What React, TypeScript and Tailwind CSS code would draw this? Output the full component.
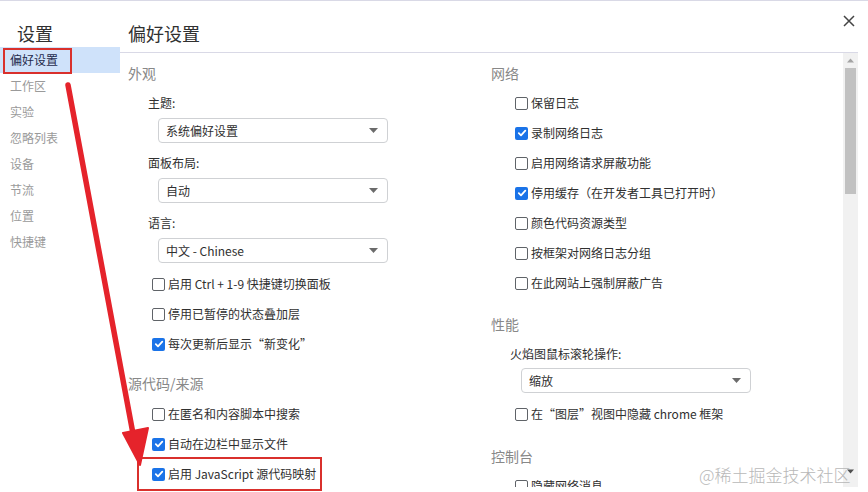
import React from "react";

const font = { fontFamily: '"Noto Sans CJK SC", "Noto Sans", sans-serif' };

const navItems = ["偏好设置", "工作区", "实验", "忽略列表", "设备", "节流", "位置", "快捷键"];

function Box({ checked }: { checked?: boolean }) {
  if (checked) {
    return (
      <span className="w-[13px] h-[13px] rounded-[2px] bg-[#1a73e8] flex items-center justify-center shrink-0">
        <svg width="10" height="10" viewBox="0 0 10 10">
          <path d="M1.8 5.2 L4 7.3 L8.3 2.6" stroke="white" strokeWidth="1.8" fill="none" strokeLinecap="round" strokeLinejoin="round" />
        </svg>
      </span>
    );
  }
  return <span className="w-[13px] h-[13px] rounded-[2px] border border-[#5f6368] bg-white shrink-0" />;
}

function Check({ label, checked }: { label: string; checked?: boolean }) {
  return (
    <div className="h-[30px] flex items-center gap-[3px] pl-[24px] text-[12px] text-[#303030]">
      <Box checked={checked} />
      <span>{label}</span>
    </div>
  );
}

function Select({ value }: { value: string }) {
  return (
    <div className="ml-[30px] w-[230px] h-[25px] border border-[#cfd1d4] rounded-[4px] flex items-center justify-between pl-[7px] pr-[9px] text-[12px] text-[#303030]">
      <span>{value}</span>
      <svg width="9" height="5" viewBox="0 0 9 5">
        <path d="M0 0 L9 0 L4.5 5 Z" fill="#6b6b6b" />
      </svg>
    </div>
  );
}

function Field({ label, value }: { label: string; value: string }) {
  return (
    <div className="mt-[10px]">
      <div className="h-[20px] flex items-center pl-[20px] text-[12px] text-[#303030]">{label}</div>
      <div className="mt-[5px]">
        <Select value={value} />
      </div>
    </div>
  );
}

function SectionTitle({ children, className = "" }: { children: React.ReactNode; className?: string }) {
  return <div className={"h-[20px] flex items-center text-[14px] text-[#888888] " + className}>{children}</div>;
}

export default function App() {
  return (
    <div style={font} className="relative w-[868px] h-[492px] overflow-hidden bg-white border-t border-[#d9d9e6] flex">
      {/* sidebar */}
      <div className="w-[120px] shrink-0">
        <div className="pt-[20px] pl-[17px] h-[46px] text-[18px] leading-[24px] text-[#303030]">设置</div>
        {navItems.map((n, i) => (
          <div
            key={n}
            className={
              "h-[26px] flex items-center pl-[10px] text-[12px] " +
              (i === 0 ? "bg-[#cfe2fa] text-[#1f2b4d]" : "text-[#9a9a9a]")
            }
          >
            {n}
          </div>
        ))}
      </div>

      {/* main */}
      <div className="flex-1 flex flex-col pr-[10px] pb-[5px]">
        <div className="h-[52px] shrink-0 border-b border-[#d9d9e6] pl-[8px] pt-[20px] text-[18px] leading-[24px] text-[#303030]">
          偏好设置
        </div>
        <div className="flex flex-1 min-h-0 overflow-hidden">
          {/* left column */}
          <div className="w-[371px] pl-[8px] pt-[10px]">
            <SectionTitle>外观</SectionTitle>
            <Field label="主题:" value="系统偏好设置" />
            <Field label="面板布局:" value="自动" />
            <Field label="语言:" value="中文 - Chinese" />
            <div className="mt-[6px]">
              <Check label="启用 Ctrl + 1-9 快捷键切换面板" />
              <Check label="停用已暂停的状态叠加层" />
              <Check label="每次更新后显示“新变化”" checked />
            </div>
            <SectionTitle className="mt-[14px]">源代码/来源</SectionTitle>
            <div className="mt-[6px]">
              <Check label="在匿名和内容脚本中搜索" />
              <Check label="自动在边栏中显示文件" checked />
              <Check label="启用 JavaScript 源代码映射" checked />
            </div>
          </div>

          {/* right column */}
          <div className="flex-1 pt-[10px]">
            <SectionTitle>网络</SectionTitle>
            <div className="mt-[5px]">
              <Check label="保留日志" />
              <Check label="录制网络日志" checked />
              <Check label="启用网络请求屏蔽功能" />
              <Check label="停用缓存（在开发者工具已打开时）" checked />
              <Check label="颜色代码资源类型" />
              <Check label="按框架对网络日志分组" />
              <Check label="在此网站上强制屏蔽广告" />
            </div>
            <SectionTitle className="mt-[16px]">性能</SectionTitle>
            <div className="mt-[10px] h-[20px] flex items-center pl-[19px] text-[12px] text-[#303030]">火焰图鼠标滚轮操作:</div>
            <div className="mt-[4px]">
              <Select value="缩放" />
            </div>
            <div className="mt-[6px]">
              <Check label="在“图层”视图中隐藏 chrome 框架" />
            </div>
            <SectionTitle className="mt-[17px]">控制台</SectionTitle>
            <div className="mt-[5px]">
              <Check label="隐藏网络消息" />
            </div>
          </div>

          {/* scrollbar */}
          <div className="w-[15px] shrink-0 bg-[#f1f1f1] flex flex-col items-center">
            <svg width="15" height="15" viewBox="0 0 15 15" className="shrink-0">
              <path d="M4 9.5 L11 9.5 L7.5 5.5 Z" fill="#a3a3a3" />
            </svg>
            <div className="w-[11px] h-[126px] bg-[#c1c1c1]" />
            <div className="flex-1" />
            <svg width="15" height="15" viewBox="0 0 15 15" className="shrink-0 mb-[8px]">
              <path d="M4 5.5 L11 5.5 L7.5 9.5 Z" fill="#505050" />
            </svg>
          </div>
        </div>
      </div>

      {/* close */}
      <svg className="absolute left-[843px] top-[14px]" width="12" height="12" viewBox="0 0 12 12">
        <path d="M1 1 L11 11 M11 1 L1 11" stroke="#444" strokeWidth="1.5" />
      </svg>

      {/* red highlight boxes */}
      <div className="absolute left-[3px] top-[47px] w-[69px] h-[26px] border-2 border-[#d9302c]" />
      <div className="absolute left-[137px] top-[456px] w-[185px] h-[34px] border-2 border-[#d9302c]" />

      {/* red arrow */}
      <svg className="absolute left-0 top-0 pointer-events-none" width="868" height="492" viewBox="0 0 868 492">
        <path d="M68 84 L134 438" stroke="#e5232b" strokeWidth="5.5" strokeLinecap="round" fill="none" />
        <path d="M123 432 L148 427 L140 464 Z" fill="#e5232b" stroke="#e5232b" strokeWidth="2" strokeLinejoin="round" />
      </svg>

      {/* watermark */}
      <div
        className="absolute left-[699px] top-[462px] text-[17px] leading-[24px] text-[#b8b8b8]"
        style={{ fontFamily: '"Noto Sans CJK SC", sans-serif', fontWeight: 300 }}
      >
        @稀土掘金技术社区
      </div>
    </div>
  );
}
